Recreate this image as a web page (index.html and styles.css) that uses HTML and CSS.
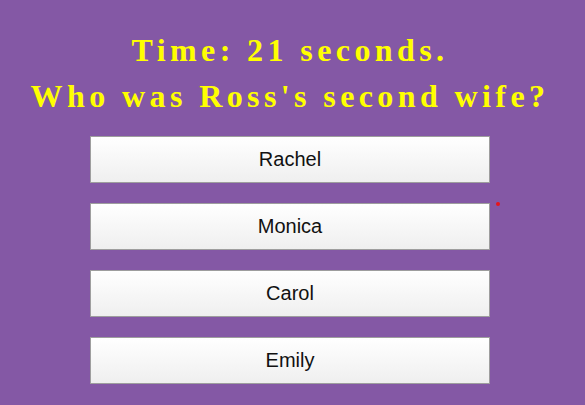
FILE: index.html
```html
<!DOCTYPE html>
<html>
<head>
<meta charset="utf-8">
<link rel="stylesheet" href="styles.css">
</head>
<body>
<div class="quiz">
  <h1 class="question">Time: 21 seconds.<br>Who was Ross's second wife?</h1>
  <div class="answers">
    <button class="answer">Rachel</button>
    <button class="answer">Monica</button>
    <button class="answer">Carol</button>
    <button class="answer">Emily</button>
  </div>
  <span class="dot"></span>
</div>
</body>
</html>
```
FILE: styles.css
```css
html, body {
  margin: 0;
  padding: 0;
  background: #8458a5;
  height: 100%;
}
.quiz {
  position: relative;
  width: 580px;
  padding-top: 27px;
}
.question {
  margin: 0;
  text-align: center;
  font-family: "Liberation Serif", serif;
  font-weight: bold;
  font-size: 32px;
  line-height: 46px;
  letter-spacing: 4.4px;
  color: #ffff00;
}
.answers {
  display: flex;
  flex-direction: column;
  align-items: center;
  gap: 20px;
  margin-top: 17px;
}
.answer {
  width: 400px;
  height: 47px;
  box-sizing: border-box;
  border: 1px solid #9e9e9e;
  background: linear-gradient(#ffffff, #efefef);
  font-family: "Liberation Sans", Arial, sans-serif;
  font-size: 20px;
  color: #111;
  padding: 0;
}
.dot {
  position: absolute;
  left: 496px;
  top: 202px;
  width: 4px;
  height: 4px;
  border-radius: 50%;
  background: #e8151b;
}
```
